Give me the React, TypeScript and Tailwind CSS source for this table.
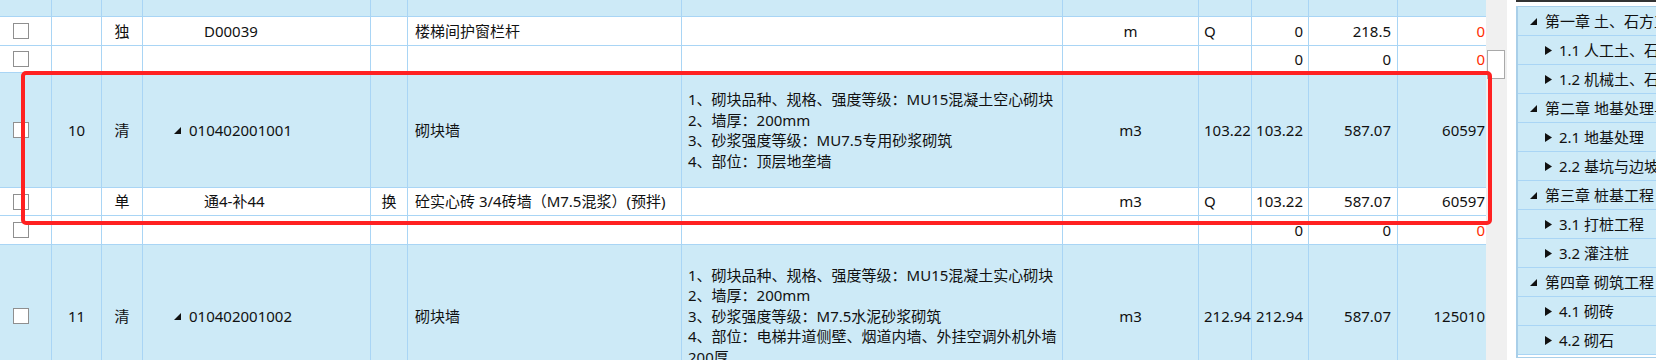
import React from 'react'

type Cell = React.ReactNode

interface RowData {
  h: string
  bg: string
  check?: boolean
  cells: Cell[]
}

const cols = 'grid grid-cols-[52px_50px_41px_228px_37px_274px_381px_136px_53px_57px_89px_88px]'

function Check() {
  return <div className="ml-[13px] w-4 h-4 border border-[#8f8f8f] bg-white" />
}

function Expanded({ className = '' }: { className?: string }) {
  return (
    <svg width="7" height="7" viewBox="0 0 7 7" className={className}>
      <polygon points="7,0 7,7 0,7" fill="#111" />
    </svg>
  )
}

function Collapsed() {
  return (
    <svg width="7" height="9" viewBox="0 0 7 9">
      <polygon points="0,0 7,4.5 0,9" fill="#111" />
    </svg>
  )
}

function Code({ text, level }: { text: string; level: 1 | 2 }) {
  if (level === 1) {
    return (
      <div className="flex items-center pl-[31px] gap-[8px]">
        <Expanded className="mt-[1px]" />
        <span>{text}</span>
      </div>
    )
  }
  return <div className="pl-[61px]">{text}</div>
}

const Red = ({ v }: { v: string }) => <span className="text-[#ff2d00]">{v}</span>

const desc1 = [
  '1、砌块品种、规格、强度等级：MU15混凝土空心砌块',
  '2、墙厚：200mm',
  '3、砂浆强度等级：MU7.5专用砂浆砌筑',
  '4、部位：顶层地垄墙',
]

const desc2 = [
  '1、砌块品种、规格、强度等级：MU15混凝土实心砌块',
  '2、墙厚：200mm',
  '3、砂浆强度等级：M7.5水泥砂浆砌筑',
  '4、部位：电梯井道侧壁、烟道内墙、外挂空调外机外墙',
  '200厚',
]

const Desc = ({ lines }: { lines: string[] }) => (
  <div className="leading-[20.5px] whitespace-nowrap">
    {lines.map((l) => (
      <div key={l}>{l}</div>
    ))}
  </div>
)

const blue = 'bg-[#cdeaf7]'
const white = 'bg-white'

const rows: RowData[] = [
  { h: 'h-[17px]', bg: blue, cells: [] },
  {
    h: 'h-[29px]', bg: white, check: true,
    cells: ['', '独', <Code text="D00039" level={2} />, '', '楼梯间护窗栏杆', '', 'm', 'Q', '0', '218.5', <Red v="0" />],
  },
  {
    h: 'h-[27px]', bg: white, check: true,
    cells: ['', '', '', '', '', '', '', '', '0', '0', <Red v="0" />],
  },
  {
    h: 'h-[115px]', bg: blue, check: true,
    cells: ['10', '清', <Code text="010402001001" level={1} />, '', '砌块墙', <Desc lines={desc1} />, 'm3', '103.22', '103.22', '587.07', '60597'],
  },
  {
    h: 'h-[28px]', bg: white, check: true,
    cells: ['', '单', <Code text="通4-补44" level={2} />, '换', '砼实心砖 3/4砖墙（M7.5混浆）(预拌)', '', 'm3', 'Q', '103.22', '587.07', '60597'],
  },
  {
    h: 'h-[29px]', bg: white, check: true,
    cells: ['', '', '', '', '', '', '', '', '0', '0', <Red v="0" />],
  },
  {
    h: 'h-[143px]', bg: blue, check: true,
    cells: ['11', '清', <Code text="010402001002" level={1} />, '', '砌块墙', <Desc lines={desc2} />, 'm3', '212.94', '212.94', '587.07', '125010'],
  },
]

// alignment of columns 1..11
const align = [
  'justify-center',
  'justify-center',
  'justify-start',
  'justify-center',
  'justify-start pl-[7px]',
  'justify-start pl-[6px]',
  'justify-center',
  'justify-start pl-[5px]',
  'justify-end pr-[5px]',
  'justify-end pr-[6px]',
  'justify-end pr-[1px]',
]

function TableRow({ row }: { row: RowData }) {
  return (
    <div className={`${cols} ${row.h} ${row.bg} border-b border-[#a9d5f5]`}>
      <div className="flex items-center border-r border-[#a9d5f5]">{row.check && <Check />}</div>
      {align.map((a, i) => (
        <div
          key={i}
          className={`flex items-center whitespace-nowrap overflow-hidden ${a} ${i < 10 ? 'border-r border-[#a9d5f5]' : ''}`}
        >
          {row.cells[i]}
        </div>
      ))}
    </div>
  )
}

const tree: { text: string; chapter: boolean }[] = [
  { text: '第一章 土、石方工程', chapter: true },
  { text: '1.1 人工土、石方', chapter: false },
  { text: '1.2 机械土、石方', chapter: false },
  { text: '第二章 地基处理与边坡支护工程', chapter: true },
  { text: '2.1 地基处理', chapter: false },
  { text: '2.2 基坑与边坡支护', chapter: false },
  { text: '第三章 桩基工程', chapter: true },
  { text: '3.1 打桩工程', chapter: false },
  { text: '3.2 灌注桩', chapter: false },
  { text: '第四章 砌筑工程', chapter: true },
  { text: '4.1 砌砖', chapter: false },
  { text: '4.2 砌石', chapter: false },
]

export default function App() {
  return (
    <div className="relative w-[1656px] h-[360px] overflow-hidden flex bg-white text-[15px] text-[#111] font-['Noto_Sans','Noto_Sans_CJK_SC',sans-serif]">
      {/* grid */}
      <div className="w-[1486px] shrink-0 overflow-hidden">
        {rows.map((r, i) => (
          <TableRow key={i} row={r} />
        ))}
      </div>

      {/* scrollbar */}
      <div className="w-[21px] shrink-0 bg-[#f0f0f0] pt-[50px] pl-[1px]">
        <div className="w-[18px] h-[29px] bg-white border border-[#a9a9a9]" />
      </div>

      <div className="w-[9px] shrink-0" />

      {/* chapter tree */}
      <div className="flex-1 flex flex-col overflow-hidden">
        <div className="h-[2px] bg-[#333]" />
        <div className="h-[4px]" />
        <div className="border-l-2 border-t border-b border-[#a9cfe9] pb-[2px]">
          {tree.map((t) => (
            <div
              key={t.text}
              className="h-[29px] bg-[#cdeaf7] border-b border-[#a9d5f5] flex items-center whitespace-nowrap"
            >
              {t.chapter ? (
                <div className="flex items-center pl-[12px] gap-[8px]">
                  <Expanded className="mt-[1px]" />
                  <span>{t.text}</span>
                </div>
              ) : (
                <div className="flex items-center pl-[27px] gap-[7px]">
                  <Collapsed />
                  <span>{t.text}</span>
                </div>
              )}
            </div>
          ))}
        </div>
      </div>

      {/* highlight box */}
      <div className="absolute left-[21px] top-[71px] w-[1471px] h-[154px] border-[4px] border-[#ff2121] rounded-[5px] pointer-events-none" />
    </div>
  )
}
